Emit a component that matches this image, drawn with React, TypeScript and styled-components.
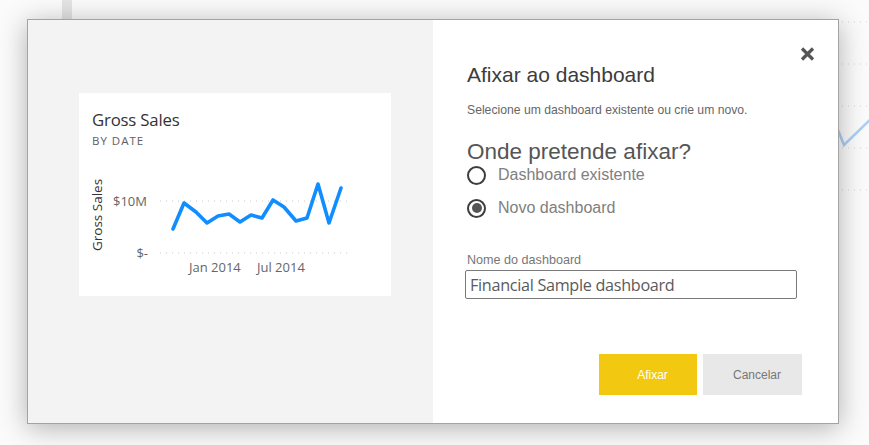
import styled, { createGlobalStyle } from "styled-components";

const GlobalStyle = createGlobalStyle`
  html, body {
    margin: 0;
    padding: 0;
    background: #fbfbfb;
  }
  body {
    font-family: "Liberation Sans", Arial, sans-serif;
  }
`;

const points = [
  [94, 74], [105, 48], [117, 57], [128, 68], [139, 61], [150, 59], [161, 67],
  [172, 60], [183, 63], [194, 45], [205, 52], [217, 66], [228, 63], [239, 29],
  [250, 68], [262, 33],
];

function SalesChart() {
  return (
    <ChartSvg width="312" height="141" viewBox="0 0 312 141">
      <line x1="81" y1="46" x2="271" y2="46" stroke="#c8c8c8" strokeDasharray="1 5" />
      <line x1="81" y1="98" x2="271" y2="98" stroke="#c8c8c8" strokeDasharray="1 5" />
      <AxisText x="68" y="51" textAnchor="end">$10M</AxisText>
      <AxisText x="69" y="103" textAnchor="end">$-</AxisText>
      <AxisText x="110" y="117">Jan 2014</AxisText>
      <AxisText x="178" y="117">Jul 2014</AxisText>
      <AxisTitle x="0" y="0" transform="translate(23 60) rotate(-90)" textAnchor="middle">
        Gross Sales
      </AxisTitle>
      <polyline
        points={points.map((p) => p.join(",")).join(" ")}
        fill="none"
        stroke="#118dff"
        strokeWidth="3.6"
        strokeLinejoin="round"
        strokeLinecap="round"
      />
    </ChartSvg>
  );
}

function CloseIcon() {
  return (
    <svg width="15" height="14" viewBox="0 0 15 14">
      <path d="M2 1.5 L13 12.5 M13 1.5 L2 12.5" stroke="#555" strokeWidth="3.2" strokeLinecap="butt" />
    </svg>
  );
}

export function App() {
  return (
    <Page>
      <GlobalStyle />
      <BackgroundTile />
      <BackgroundChart width="40" height="240" viewBox="0 0 40 240">
        <line x1="0" y1="22" x2="40" y2="22" stroke="#d6d6d6" strokeDasharray="1 5" />
        <line x1="0" y1="64" x2="40" y2="64" stroke="#d6d6d6" strokeDasharray="1 5" />
        <line x1="0" y1="106" x2="40" y2="106" stroke="#d6d6d6" strokeDasharray="1 5" />
        <line x1="0" y1="148" x2="40" y2="148" stroke="#d6d6d6" strokeDasharray="1 5" />
        <line x1="0" y1="190" x2="40" y2="190" stroke="#d6d6d6" strokeDasharray="1 5" />
        <polyline points="2,130 8,145 40,114" fill="none" stroke="#a9d0f7" strokeWidth="2.5" />
        <rect x="33" y="212" width="2" height="10" fill="#cfcfcf" />
      </BackgroundChart>

      <Dialog>
        <PreviewPane>
          <Card>
            <CardHeader>
              <CardTitle>Gross Sales</CardTitle>
              <CardSubtitle>BY DATE</CardSubtitle>
            </CardHeader>
            <SalesChart />
          </Card>
        </PreviewPane>

        <FormPane>
          <CloseRow>
            <CloseButton aria-label="Fechar">
              <CloseIcon />
            </CloseButton>
          </CloseRow>
          <Title>Afixar ao dashboard</Title>
          <Hint>Selecione um dashboard existente ou crie um novo.</Hint>
          <Question>Onde pretende afixar?</Question>
          <RadioRow>
            <RadioCircle />
            <RadioLabel>Dashboard existente</RadioLabel>
          </RadioRow>
          <RadioRow $spaced>
            <RadioCircle $checked />
            <RadioLabel>Novo dashboard</RadioLabel>
          </RadioRow>
          <FieldLabel>Nome do dashboard</FieldLabel>
          <NameInput defaultValue="Financial Sample dashboard" />
          <Actions>
            <ActionButton $primary>Afixar</ActionButton>
            <ActionButton>Cancelar</ActionButton>
          </Actions>
        </FormPane>
      </Dialog>
    </Page>
  );
}

const Page = styled.div`
  position: relative;
  width: 869px;
  height: 445px;
  overflow: hidden;
  background: #fbfbfb;
`;

const BackgroundTile = styled.div`
  position: absolute;
  left: 62px;
  top: 0;
  width: 10px;
  height: 40px;
  background: #e4e4e4;
`;

const BackgroundChart = styled.svg`
  position: absolute;
  left: 836px;
  top: 0;
`;

const Dialog = styled.div`
  position: absolute;
  left: 27px;
  top: 19px;
  width: 812px;
  height: 405px;
  box-sizing: border-box;
  border: 1px solid #a3a3a3;
  display: flex;
  background: #fff;
  box-shadow: 0 4px 26px rgba(0, 0, 0, 0.3);
`;

const PreviewPane = styled.div`
  width: 405px;
  background: #f3f3f3;
  padding: 73px 0 0 51px;
  box-sizing: border-box;
`;

const Card = styled.div`
  width: 312px;
  height: 203px;
  background: #fff;
  display: flex;
  flex-direction: column;
`;

const CardHeader = styled.div`
  padding: 16px 0 0 13px;
  height: 62px;
  box-sizing: border-box;
  font-family: "Open Sans", "Noto Sans", sans-serif;
`;

const CardTitle = styled.div`
  font-size: 16.8px;
  line-height: 22px;
  color: #333;
  letter-spacing: -0.2px;
`;

const CardSubtitle = styled.div`
  margin-top: 3px;
  font-size: 11.5px;
  line-height: 14px;
  color: #606060;
  letter-spacing: 1px;
`;

const ChartSvg = styled.svg`
  display: block;
`;

const AxisText = styled.text`
  font-family: "Open Sans", "Noto Sans", sans-serif;
  font-size: 13px;
  fill: #666;
`;

const AxisTitle = styled.text`
  font-family: "Open Sans", "Noto Sans", sans-serif;
  font-size: 13.5px;
  fill: #333;
`;

const FormPane = styled.div`
  flex: 1;
  display: flex;
  flex-direction: column;
  padding: 27px 23px 0 32px;
  box-sizing: border-box;
`;

const CloseRow = styled.div`
  display: flex;
  justify-content: flex-end;
  height: 14px;
`;

const CloseButton = styled.button`
  border: none;
  background: none;
  padding: 0;
  width: 15px;
  height: 14px;
  cursor: pointer;
  display: flex;
`;

const Title = styled.h2`
  margin: 3px 0 0 2px;
  font-size: 21px;
  line-height: 22px;
  font-weight: normal;
  color: #3c3c3c;
`;

const Hint = styled.p`
  margin: 17px 0 0 2px;
  font-size: 12.2px;
  line-height: 14px;
  color: #666;
`;

const Question = styled.h3`
  margin: 23px 0 0 2px;
  font-size: 22.5px;
  line-height: 24px;
  font-weight: normal;
  color: #555;
`;

const RadioRow = styled.label<{ $spaced?: boolean }>`
  display: flex;
  align-items: center;
  gap: 12px;
  height: 22px;
  margin: ${(p) => (p.$spaced ? "11px" : "0")} 0 0 2px;
  cursor: pointer;
`;

const RadioCircle = styled.span<{ $checked?: boolean }>`
  width: 19px;
  height: 19px;
  box-sizing: border-box;
  border: 2px solid #3d3d3d;
  border-radius: 50%;
  display: flex;
  align-items: center;
  justify-content: center;

  &::after {
    content: "";
    display: ${(p) => (p.$checked ? "block" : "none")};
    width: 10px;
    height: 10px;
    border-radius: 50%;
    background: #555;
  }
`;

const RadioLabel = styled.span`
  font-size: 16px;
  color: #808080;
`;

const FieldLabel = styled.div`
  margin: 34px 0 0 2px;
  font-size: 12.6px;
  line-height: 15px;
  color: #777;
`;

const NameInput = styled.input`
  margin-top: 2px;
  width: 332px;
  height: 29px;
  box-sizing: border-box;
  border: 1px solid #7a7a7a;
  border-radius: 2px;
  padding: 0 4px;
  font-family: "Open Sans", "Noto Sans", sans-serif;
  font-size: 16.2px;
  letter-spacing: -0.3px;
  color: #5a5a5a;
  outline: none;
`;

const Actions = styled.div`
  display: flex;
  justify-content: flex-end;
  gap: 6px;
  margin: 55px 13px 0 0;
`;

const ActionButton = styled.button<{ $primary?: boolean }>`
  width: ${(p) => (p.$primary ? "98px" : "99px")};
  height: 41px;
  border: none;
  padding: 0 0 0 9px;
  font-family: "Liberation Sans", Arial, sans-serif;
  font-size: 12px;
  cursor: pointer;
  background: ${(p) => (p.$primary ? "#f2c811" : "#e8e8e8")};
  color: ${(p) => (p.$primary ? "#fff" : "#777")};
`;

export default App;
